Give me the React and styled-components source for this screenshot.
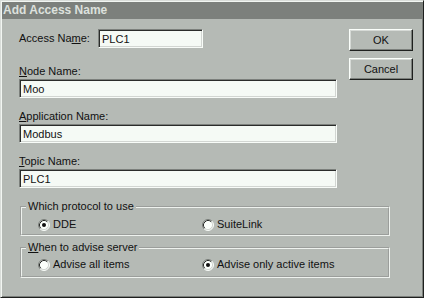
import React from "react";
import styled, { createGlobalStyle } from "styled-components";

const Global = createGlobalStyle`
  html, body { margin: 0; padding: 0; background: #b5bab5; }
  body {
    font-family: "Liberation Sans", Arial, sans-serif;
    font-size: 11px;
    color: #111;
  }
  * { box-sizing: border-box; }
`;

const Window = styled.div`
  width: 424px;
  height: 298px;
  background: #b5bab5;
  border: 1px solid;
  border-color: #d9ddd9 #1e201e #1e201e #d9ddd9;
  box-shadow: inset 1px 1px #f2f6f2, inset -1px -1px #7c807c;
  padding: 1px;
  display: flex;
  flex-direction: column;
`;

const TitleBar = styled.div`
  height: 17px;
  background: #7c807c;
  color: #dde1dd;
  font-weight: bold;
  font-size: 12px;
  line-height: 17px;
  padding-left: 1px;
  white-space: nowrap;
`;

const Content = styled.div`
  padding: 10px 0 0 17px;
  display: flex;
  flex-direction: column;
`;

const Top = styled.div`
  display: flex;
  gap: 12px;
`;

const Fields = styled.div`
  width: 318px;
  display: flex;
  flex-direction: column;
`;

const Buttons = styled.div`
  width: 64px;
  display: flex;
  flex-direction: column;
  gap: 7px;
`;

const Button = styled.button`
  width: 64px;
  height: 22px;
  padding: 0;
  font-family: inherit;
  font-size: 11px;
  color: #111;
  background: #b5bab5;
  border: 1px solid;
  border-color: #fbfffb #1e201e #1e201e #fbfffb;
  box-shadow: inset -1px -1px #7c807c, inset 1px 1px #d6dad6;
  border-radius: 0;
`;

const InlineRow = styled.div`
  display: flex;
  align-items: center;
  height: 19px;
`;

const Label = styled.label`
  display: block;
  line-height: 13px;
  width: ${(p) => (p.$width ? `${p.$width}px` : "auto")};
  margin-top: ${(p) => p.$top || 0}px;
  margin-bottom: ${(p) => (p.$inline ? 0 : 1)}px;
  white-space: nowrap;
`;

const Input = styled.input`
  width: ${(p) => p.$width}px;
  height: 19px;
  margin: 0;
  padding: 0 0 0 3px;
  font-family: inherit;
  font-size: 11px;
  color: #111;
  background: #f5faf5;
  border: 1px solid;
  border-color: #7c807c #f8fcf8 #f8fcf8 #7c807c;
  box-shadow: inset 1px 1px #2a2c2a, inset -1px -1px #d2d6d2;
  border-radius: 0;
  outline: none;
`;

const Groups = styled.div`
  margin: 12px 0 0 1px;
  width: 370px;
  display: flex;
  flex-direction: column;
  gap: 5px;
`;

const Group = styled.fieldset`
  margin: 0;
  min-width: 0;
  padding: 0 4px ${(p) => p.$bottom}px;
  border: 2px groove #eef2ee;
`;

const Legend = styled.legend`
  padding: 0 2px;
  line-height: 13px;
  font-size: 11px;
`;

const RadioRow = styled.div`
  display: grid;
  grid-template-columns: 164px 1fr;
  padding: ${(p) => p.$top}px 0 0 12px;
`;

const RadioItem = styled.label`
  display: flex;
  align-items: center;
  gap: 3px;
  height: 13px;
  line-height: 13px;
  white-space: nowrap;
`;

const RadioSvg = styled.svg`
  width: 12px;
  height: 12px;
  flex: none;
  display: block;
`;

const U = styled.span`
  text-decoration: underline;
  text-underline-offset: 1px;
`;

function Radio({ checked }) {
  return (
    <RadioSvg viewBox="0 0 12 12">
      <circle cx="6" cy="6" r="5" fill="#fbfffb" />
      <path d="M2.11 9.89 A5.5 5.5 0 0 1 9.89 2.11" fill="none" stroke="#7c807c" strokeWidth="1" />
      <path d="M9.89 2.11 A5.5 5.5 0 0 1 2.11 9.89" fill="none" stroke="#fbfffb" strokeWidth="1" />
      <path d="M2.82 9.18 A4.5 4.5 0 0 1 9.18 2.82" fill="none" stroke="#2a2c2a" strokeWidth="1" />
      <path d="M9.18 2.82 A4.5 4.5 0 0 1 2.82 9.18" fill="none" stroke="#d2d6d2" strokeWidth="1" />
      {checked && <circle cx="6" cy="6" r="2" fill="#111" />}
    </RadioSvg>
  );
}

export default function App() {
  return (
    <>
      <Global />
      <Window>
        <TitleBar>Add Access Name</TitleBar>
        <Content>
          <Top>
            <Fields>
              <InlineRow>
                <Label $width={79} $inline>
                  Access Na<U>m</U>e:
                </Label>
                <Input $width={105} defaultValue="PLC1" />
              </InlineRow>
              <Label $top={17}>
                <U>N</U>ode Name:
              </Label>
              <Input $width={318} defaultValue="Moo" />
              <Label $top={12}>
                <U>A</U>pplication Name:
              </Label>
              <Input $width={318} defaultValue="Modbus" />
              <Label $top={12}>
                <U>T</U>opic Name:
              </Label>
              <Input $width={318} defaultValue="PLC1" />
            </Fields>
            <Buttons>
              <Button>OK</Button>
              <Button>Cancel</Button>
            </Buttons>
          </Top>
          <Groups>
            <Group $bottom={3}>
              <Legend>Which protocol to use</Legend>
              <RadioRow $top={5}>
                <RadioItem>
                  <Radio checked />
                  DDE
                </RadioItem>
                <RadioItem>
                  <Radio />
                  SuiteLink
                </RadioItem>
              </RadioRow>
            </Group>
            <Group $bottom={5}>
              <Legend>
                <U>W</U>hen to advise server
              </Legend>
              <RadioRow $top={4}>
                <RadioItem>
                  <Radio />
                  Advise all items
                </RadioItem>
                <RadioItem>
                  <Radio checked />
                  Advise only active items
                </RadioItem>
              </RadioRow>
            </Group>
          </Groups>
        </Content>
      </Window>
    </>
  );
}
